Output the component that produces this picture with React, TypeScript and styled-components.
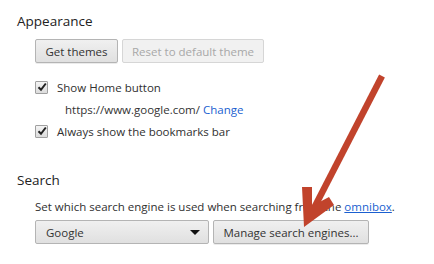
import styled, { createGlobalStyle } from "styled-components";

const Global = createGlobalStyle`
  html, body {
    margin: 0;
    padding: 0;
    background: #fff;
  }
  body {
    font-family: "Open Sans", "Noto Sans", sans-serif;
    font-size: 11.5px;
    color: #303030;
  }
`;

const Page = styled.div`
  position: relative;
  width: 434px;
  height: 264px;
  overflow: hidden;
  padding: 11px 0 0 17px;
  box-sizing: border-box;
`;

const Section = styled.section<{ gap?: number }>`
  margin-bottom: ${(p) => p.gap ?? 0}px;
`;

const Heading = styled.h3`
  margin: 0;
  font-size: 13.5px;
  font-weight: 400;
  line-height: 20px;
  color: #222;
`;

const Body = styled.div`
  padding-left: 18px;
`;

const ButtonRow = styled.div<{ top: number }>`
  display: flex;
  gap: 4px;
  margin-top: ${(p) => p.top}px;
`;

const Button = styled.button<{ w: number }>`
  box-sizing: border-box;
  width: ${(p) => p.w}px;
  height: 24px;
  padding: 0;
  font-family: inherit;
  font-size: 11.5px;
  color: ${(p) => (p.disabled ? "#a8a8a8" : "#333")};
  background: ${(p) =>
    p.disabled ? "#f1f1f1" : "linear-gradient(#f0f0f0, #e0e0e0)"};
  border: 1px solid ${(p) => (p.disabled ? "#d6d6d6" : "#b4b4b4")};
  border-radius: 2px;
  box-shadow: ${(p) => (p.disabled ? "none" : "0 1px 0 rgba(0,0,0,0.08)")};
`;

const CheckRow = styled.label<{ top: number }>`
  display: flex;
  align-items: center;
  gap: 9px;
  height: 16px;
  margin-top: ${(p) => p.top}px;
`;

const Box = styled.span`
  width: 11px;
  height: 11px;
  border: 1px solid #a0a0a0;
  border-radius: 1px;
  background: linear-gradient(#f4f4f4, #dcdcdc);
  display: flex;
  align-items: center;
  justify-content: center;
`;

const SubLine = styled.div`
  margin-top: 7px;
  padding-left: 30px;
  height: 16px;
  line-height: 16px;
  color: #333;
`;

const Link = styled.a`
  color: #1a5fd0;
  text-decoration: none;
`;

const UnderLink = styled(Link)`
  text-decoration: underline;
`;

const Desc = styled.p`
  margin: 9px 0 0;
  line-height: 16px;
`;

const Select = styled.div`
  box-sizing: border-box;
  width: 174px;
  height: 24px;
  border: 1px solid #b4b4b4;
  border-radius: 2px;
  background: linear-gradient(#f0f0f0, #e0e0e0);
  display: flex;
  align-items: center;
  justify-content: space-between;
  padding: 0 8px 0 10px;
  color: #333;
`;

const Caret = styled.span`
  width: 0;
  height: 0;
  border-left: 5px solid transparent;
  border-right: 5px solid transparent;
  border-top: 5px solid #111;
`;

const Overlay = styled.svg`
  position: absolute;
  left: 0;
  top: 0;
  pointer-events: none;
`;

const Check = () => (
  <svg width="10" height="10" viewBox="0 0 10 10">
    <path d="M1.5 5.2 L4 7.8 L8.8 1.5" fill="none" stroke="#222" strokeWidth="2" />
  </svg>
);

export default function App() {
  return (
    <>
      <Global />
      <Page>
        <Section gap={31}>
          <Heading>Appearance</Heading>
          <Body>
            <ButtonRow top={8}>
              <Button w={83}>Get themes</Button>
              <Button w={142} disabled>
                Reset to default theme
              </Button>
            </ButtonRow>
            <CheckRow top={16}>
              <Box>
                <Check />
              </Box>
              Show Home button
            </CheckRow>
            <SubLine>
              https://www.google.com/ <Link href="#">Change</Link>
            </SubLine>
            <CheckRow top={5}>
              <Box>
                <Check />
              </Box>
              Always show the bookmarks bar
            </CheckRow>
          </Body>
        </Section>
        <Section>
          <Heading>Search</Heading>
          <Body>
            <Desc>
              Set which search engine is used when searching from the{" "}
              <UnderLink href="#">omnibox</UnderLink>.
            </Desc>
            <ButtonRow top={5}>
              <Select>
                Google
                <Caret />
              </Select>
              <Button w={156}>Manage search engines...</Button>
            </ButtonRow>
          </Body>
        </Section>
        <Overlay width="434" height="264">
          <line x1="382" y1="76" x2="312" y2="212" stroke="#c1432c" strokeWidth="6.5" />
          <polygon points="302,187 312,187 312,206 329,197 334,205 304,227" fill="#c1432c" />
        </Overlay>
      </Page>
    </>
  );
}
